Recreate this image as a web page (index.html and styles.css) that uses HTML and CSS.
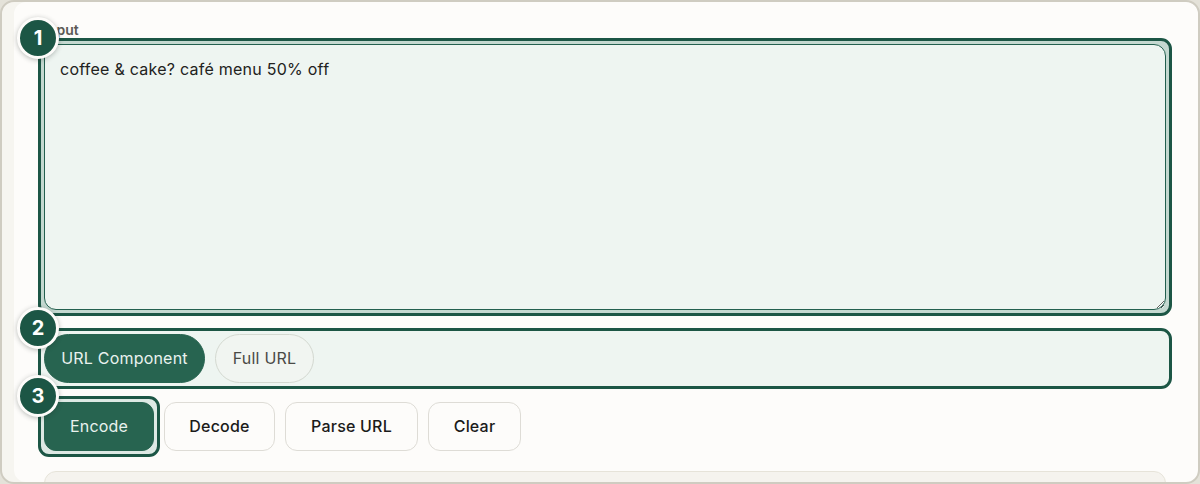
FILE: index.html
```html
<!DOCTYPE html>
<html lang="en">
<head>
<meta charset="utf-8">
<title>URL Encoder</title>
<link rel="stylesheet" href="styles.css">
</head>
<body>
<main class="card">
  <label class="field-label" for="input">Input</label>
  <div class="spot spot-input">
    <span class="badge">1</span>
    <textarea class="input" id="input">coffee &amp; cake? café menu 50% off</textarea>
  </div>
  <div class="spot spot-modes">
    <span class="badge">2</span>
    <button class="pill pill-on">URL Component</button>
    <button class="pill pill-off">Full URL</button>
  </div>
  <div class="actions">
    <div class="spot spot-encode">
      <span class="badge">3</span>
      <button class="btn btn-primary">Encode</button>
    </div>
    <button class="btn btn-decode">Decode</button>
    <button class="btn btn-parse">Parse URL</button>
    <button class="btn btn-clear">Clear</button>
  </div>
  <div class="result"></div>
</main>
</body>
</html>
```
FILE: styles.css
```css
* { box-sizing: border-box; }
html, body { margin: 0; height: 484px; overflow: hidden; background: #e4e2d9; }
body { font-family: Inter, "Liberation Sans", sans-serif; }
.card {
  height: 484px;
  padding: 20px 26px 0 36px;
  border: 2px solid #cfccc1;
  border-radius: 14px;
  background: #fdfcfa;
  box-shadow: inset 12px 0 0 #f6f5f0;
  overflow: hidden;
}
.field-label {
  display: block;
  height: 16px;
  margin-left: 6px;
  font-size: 14px;
  line-height: 15px;
  font-weight: 600;
  color: #5c5a55;
}
.spot {
  position: relative;
  border: 3px solid #1c5645;
  border-radius: 11px;
  padding: 3px;
}
.badge {
  position: absolute;
  left: -24px;
  top: -24px;
  z-index: 2;
  display: flex;
  align-items: center;
  justify-content: center;
  width: 42px;
  height: 42px;
  border: 3px solid #fdfcfa;
  border-radius: 50%;
  background: #1c5645;
  box-shadow: 0 1px 5px rgba(30, 40, 35, .3);
  color: #fff;
  font-size: 20px;
  font-weight: 700;
}
.spot-input { background: #c4d8d0; height: 278px; }
.input {
  display: block;
  width: 100%;
  height: 266px;
  padding: 14px 15px;
  border: 1px solid #23604f;
  border-radius: 12px;
  outline: none;
  resize: vertical;
  background: #eef5f1;
  color: #222220;
  letter-spacing: .25px;
  font: 16px/20px Inter, "Liberation Sans", sans-serif;
}
.spot-modes {
  display: flex;
  gap: 10px;
  height: 61px;
  margin-top: 12px;
  background: #eef5f1;
}
.pill {
  height: 49px;
  padding: 0 0 2px;
  border: 1px solid #d3d8d0;
  border-radius: 25px;
  background: #f1f5f1;
  color: #4a4a46;
  letter-spacing: .2px;
  font: 16px Inter, "Liberation Sans", sans-serif;
}
.pill-on {
  width: 161px;
  border-color: #276450;
  background: #276450;
  color: #e9f2ee;
}
.pill-off { width: 99px; }
.actions {
  display: flex;
  align-items: center;
  gap: 10px;
  height: 60px;
  margin-top: 7px;
}
.spot-encode {
  background: #dde9e4;
  margin-right: -6px;
}
.btn {
  height: 49px;
  padding: 0 0 1px;
  border: 1px solid #dedcd6;
  border-radius: 12px;
  background: #fdfcfa;
  color: #1b1b1a;
  letter-spacing: .2px;
  font: 500 16px Inter, "Liberation Sans", sans-serif;
}
.btn-primary {
  display: block;
  width: 110px;
  border-color: #276450;
  background: #276450;
  color: #e9f2ee;
  font-weight: 400;
}
.btn-decode { width: 111px; }
.btn-parse { width: 133px; }
.btn-clear { width: 93px; }
.result {
  height: 40px;
  margin: 15px 6px 0;
  border: 1px solid #e6e3d9;
  border-radius: 12px;
  background: #f5f3ee;
}
```
